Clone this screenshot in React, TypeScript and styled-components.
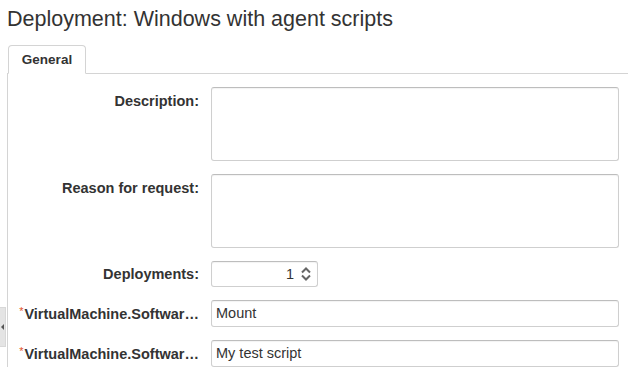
import React from "react";
import styled, { createGlobalStyle } from "styled-components";

const Global = createGlobalStyle`
  html, body { margin: 0; padding: 0; background: #fff; }
  body { font-family: "Liberation Sans", Arial, sans-serif; color: #333; overflow: hidden; }
  * { box-sizing: border-box; }
`;

const Page = styled.div`
  position: relative;
  width: 628px;
  height: 373px;
  padding-left: 7px;
  overflow: hidden;
`;

const Title = styled.h1`
  margin: 0;
  padding-top: 7px;
  font-size: 21.5px;
  line-height: 25px;
  font-weight: normal;
  color: #333;
  white-space: nowrap;
`;

const TabBar = styled.div`
  display: flex;
  margin-top: 13px;
  border-bottom: 1px solid #d4d4d4;
  padding-left: 1px;
`;

const Tab = styled.div`
  width: 78px;
  height: 29px;
  margin-bottom: -1px;
  border: 1px solid #d4d4d4;
  border-bottom-color: #fff;
  border-radius: 4px 4px 0 0;
  background: #fff;
  font-weight: bold;
  font-size: 13.5px;
  line-height: 27px;
  text-align: center;
  color: #333;
`;

const Panel = styled.div`
  border-left: 1px solid #d4d4d4;
  padding: 13px 9px 0 0;
  display: grid;
  grid-template-columns: 191px 408px;
  column-gap: 12px;
  row-gap: 13px;
`;

const Label = styled.label<{ $h?: number }>`
  display: flex;
  justify-content: flex-end;
  align-items: center;
  align-self: start;
  min-width: 0;
  padding-left: 10px;
  height: ${(p) => p.$h ?? 27}px;
  font-weight: bold;
  font-size: 14.5px;
  color: #333;
  white-space: nowrap;
`;

const LabelText = styled.span`
  min-width: 0;
`;

const Required = styled.span`
  color: #e2542b;
  font-size: 11px;
  font-weight: normal;
  align-self: flex-start;
  margin-top: 5px;
  margin-right: 1px;
  flex: none;
`;

const boxStyle = `
  border: 1px solid #cfcfcf;
  border-top-color: #bdbdbd;
  border-radius: 3px;
  background: #fff;
  box-shadow: inset 0 1px 1px rgba(0,0,0,0.05);
  font-family: "Liberation Sans", Arial, sans-serif;
  font-size: 14.5px;
  color: #333;
`;

const TextArea = styled.div`
  ${boxStyle}
  height: 74px;
`;

const Input = styled.div`
  ${boxStyle}
  height: 27px;
  padding: 0 4px;
  line-height: 25px;
  white-space: nowrap;
`;

const Spinner = styled.div`
  ${boxStyle}
  width: 107px;
  height: 26px;
  display: flex;
  align-items: center;
  justify-content: flex-end;
  padding-right: 5px;
  gap: 6px;
`;

const SpinValue = styled.span`
  line-height: 24px;
`;

const Arrows = styled.svg`
  display: block;
`;

const Handle = styled.div`
  position: absolute;
  left: 0;
  top: 307px;
  width: 6px;
  height: 40px;
  background: #e4e4e4;
  border: 1px solid #d8d8d8;
  border-left: none;
  display: flex;
  align-items: center;
  justify-content: center;
`;

const Triangle = styled.div`
  width: 0;
  height: 0;
  border-top: 3px solid transparent;
  border-bottom: 3px solid transparent;
  border-right: 3px solid #555;
`;

export default function App() {
  return (
    <Page>
      <Global />
      <Title>Deployment: Windows with agent scripts</Title>
      <TabBar>
        <Tab>General</Tab>
      </TabBar>
      <Panel>
        <Label><LabelText>Description:</LabelText></Label>
        <TextArea />
        <Label><LabelText>Reason for request:</LabelText></Label>
        <TextArea />
        <Label $h={26}><LabelText>Deployments:</LabelText></Label>
        <Spinner>
          <SpinValue>1</SpinValue>
          <Arrows width="12" height="16" viewBox="0 0 12 16">
            <path d="M2 6.5 L6 2.5 L10 6.5" fill="none" stroke="#666" strokeWidth="2" />
            <path d="M2 9.5 L6 13.5 L10 9.5" fill="none" stroke="#666" strokeWidth="2" />
          </Arrows>
        </Spinner>
        <Label>
          <Required>*</Required>
          <LabelText>VirtualMachine.Softwar…</LabelText>
        </Label>
        <Input>Mount</Input>
        <Label>
          <Required>*</Required>
          <LabelText>VirtualMachine.Softwar…</LabelText>
        </Label>
        <Input>My test script</Input>
      </Panel>
      <Handle><Triangle /></Handle>
    </Page>
  );
}
